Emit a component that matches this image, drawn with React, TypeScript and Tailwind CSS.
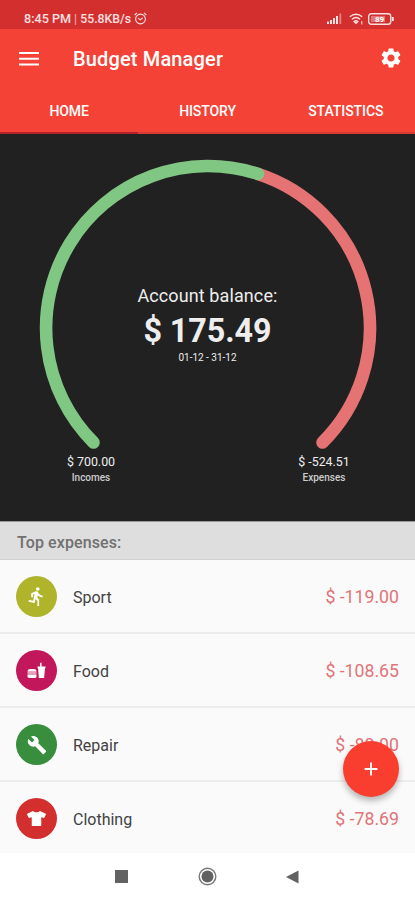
import React from "react";
import { MdAdd, MdBuild, MdDirectionsRun, MdSettings } from "react-icons/md";
import { FaTshirt } from "react-icons/fa";

function FoodIcon() {
  return (
    <svg width="19" height="17" viewBox="0 0 18 16" fill="#fff">
      <path d="M0.5 9C0.5 7.2 1.8 6.5 3.2 6.5H6.3C7.8 6.5 9 7.2 9 9Z" />
      <path d="M.5 9H9V12H.5Z" opacity=".6" />
      <path d="M.5 12H9V13.5C9 14.6 8.4 15 7.5 15H2C1 15 .5 14.6 .5 13.5Z" />
      <path d="M10 4.2H12.4V1L13.8.4V4.2H17.5V5.8H17L16.2 15H11.2L10.5 5.8H10Z" />
    </svg>
  );
}

const rows = [
  { name: "Sport", amount: "$ -119.00", color: "bg-[#afb42b]", icon: <MdDirectionsRun size={21} /> },
  { name: "Food", amount: "$ -108.65", color: "bg-[#c2185b]", icon: <FoodIcon /> },
  { name: "Repair", amount: "$ -80.00", color: "bg-[#388e3c]", icon: <MdBuild size={20} /> },
  { name: "Clothing", amount: "$ -78.69", color: "bg-[#d32f2f]", icon: <FaTshirt size={19} /> },
];

function StatusBar() {
  return (
    <div className="flex h-[29px] items-center bg-[#d32f2f] pl-6 pr-[21px] pt-2 text-white/85">
      <span className="whitespace-nowrap text-[12.6px] font-medium leading-4">
        8:45 PM <span className="font-normal opacity-70">|</span> <span className="text-[12.2px]">55.8KB/s</span>
      </span>
      <svg className="ml-[3px]" width="13" height="13" viewBox="0 0 13 13" fill="none" stroke="currentColor" strokeWidth="1.1">
        <circle cx="6.5" cy="7" r="4.9" />
        <path d="M.7 3 3 .8M12.3 3 10 .8M4.3 6.3l2 1.6 2.4-2" />
      </svg>
      <div className="ml-auto flex items-center">
        <svg width="16" height="11" viewBox="0 0 16 11" fill="currentColor">
          <path d="M0 8.5h2V11H0zM3 7h2v4H3zM6 5h2v6H6zM9 3h2v8H9z" />
          <path d="M12.5.5h1.7V11h-1.7z" opacity=".5" />
        </svg>
        <svg className="ml-[6px]" width="15" height="12" viewBox="0 0 15 12" fill="none" stroke="currentColor" strokeWidth="1.5">
          <path d="M.8 3.8C4.5.4 9.5.4 13.2 3.8M3 6.2c2.5-2.2 5.5-2.2 8 0M5.2 8.5q1.8-1.5 3.6 0L7 10.3Z" />
          <path d="M12.8 8v3.5" strokeWidth="1" />
        </svg>
        <svg className="ml-[4px]" width="26" height="12" viewBox="0 0 26 12" fill="none" stroke="currentColor">
          <rect x=".7" y=".7" width="22" height="10.6" rx="2.5" strokeWidth="1.4" />
          <path d="M24.8 4v4" strokeWidth="2" />
          <rect x="3" y="3" width="14" height="6" fill="currentColor" fillOpacity=".4" stroke="none" />
          <text x="7" y="9" fontSize="8" fontWeight="700" fill="#fff" stroke="none">89</text>
        </svg>
      </div>
    </div>
  );
}

function Header() {
  return (
    <header className="bg-[#f44336] text-white">
      <div className="flex h-[59px] items-center pl-[19px] pr-[12px]">
        <svg width="20" height="14" viewBox="0 0 20 14" fill="#fff">
          <path d="M0 0h20v2H0zM0 5.8h20v2H0zM0 11.6h20v2H0z" />
        </svg>
        <h1 className="ml-[34px] text-[20px] font-medium leading-6 tracking-[0.15px]">Budget Manager</h1>
        <MdSettings className="ml-auto -translate-y-px" size={24} />
      </div>
      <nav className="grid h-[46px] grid-cols-3 text-[14px] font-medium">
        <span className="flex items-center justify-center border-b-2 border-[#b5232a] pt-0.5 tracking-[-0.1px]">HOME</span>
        <span className="flex items-center justify-center border-b-2 border-[#d93a2f] pt-0.5 tracking-[-0.1px]">HISTORY</span>
        <span className="flex items-center justify-center border-b-2 border-[#d93a2f] pt-0.5 tracking-[-0.05px]">STATISTICS</span>
      </nav>
    </header>
  );
}

function Gauge() {
  return (
    <section className="grid h-[387px] shrink-0 bg-[#212121] text-[#eee]">
      <svg className="col-start-1 row-start-1" width="415" height="387" viewBox="0 134 415 387" fill="none" strokeWidth="12.6" strokeLinecap="round">
        <path d="M258.1 173.9A162 162 0 0 1 322.5 442.5" stroke="#e57373" />
        <path d="M93.5 442.5A162 162 0 0 1 258.1 173.9" stroke="#81c784" />
      </svg>
      <div className="col-start-1 row-start-1 flex flex-col items-center pt-[151px]">
        <div className="text-[18px] leading-[22px] tracking-[0.1px]">Account balance:</div>
        <div className="mt-[6px] text-[32.3px] font-bold leading-9 tracking-[-0.05px]">$ 175.49</div>
        <div className="mt-[3px] text-[10px] leading-3">01-12 - 31-12</div>
        <div className="mt-[90px] flex w-full justify-between px-[51px] text-center">
          <div className="w-20">
            <div className="text-[12.4px] leading-[15px]">$ 700.00</div>
            <div className="mt-px text-[10px] font-medium leading-[15px] text-[#ccc]">Incomes</div>
          </div>
          <div className="w-20">
            <div className="text-[12.4px] leading-[15px]">$ -524.51</div>
            <div className="mt-px text-[10px] font-medium leading-[15px] text-[#ccc]">Expenses</div>
          </div>
        </div>
      </div>
    </section>
  );
}

export default function App() {
  return (
    <div className="relative flex h-[900px] w-[415px] flex-col overflow-hidden bg-white font-['Roboto',sans-serif]">
      <StatusBar />
      <Header />
      <Gauge />
      <main className="flex h-[332px] shrink-0 flex-col overflow-hidden bg-[#fafafa]">
        <h2 className="flex h-[39px] shrink-0 items-center border-b border-t border-b-[#d2d2d2] border-t-[#999] bg-[#dedede] pl-[17px] pt-1 text-[16px] font-medium tracking-[0.1px] text-[#707070]">
          Top expenses:
        </h2>
        {rows.map((r) => (
          <div
            key={r.name}
            className="flex h-[74px] shrink-0 items-center border-b-2 border-[#ececec] px-4 pt-px"
          >
            <span className={`flex size-[41px] items-center justify-center rounded-full text-white ${r.color}`}>{r.icon}</span>
            <span className="ml-4 pt-0.5 text-[16px] text-[#424242]">{r.name}</span>
            <span className="ml-auto pt-0.5 text-[17.7px] text-[#e07478]">{r.amount}</span>
          </div>
        ))}
      </main>
      <footer className="flex h-[47px] shrink-0 items-center bg-white">
        <span className="ml-[115px] size-[13px] bg-[#626262]" />
        <svg className="ml-[70px]" width="19" height="19" viewBox="0 0 19 19">
          <circle cx="9.5" cy="9.5" r="8.3" fill="none" stroke="#777" strokeWidth="1.4" />
          <circle cx="9.5" cy="9.5" r="6" fill="#626262" />
        </svg>
        <svg className="ml-[69px]" width="13" height="14" viewBox="0 0 13 14">
          <path d="M0 7 12.5.5v13Z" fill="#626262" />
        </svg>
      </footer>
      <button className="absolute left-[343px] top-[741px] flex size-14 items-center justify-center rounded-full bg-[#f93e30] text-white shadow-[0_4px_6px_rgba(0,0,0,0.28)]">
        <MdAdd size={22} />
      </button>
    </div>
  );
}
